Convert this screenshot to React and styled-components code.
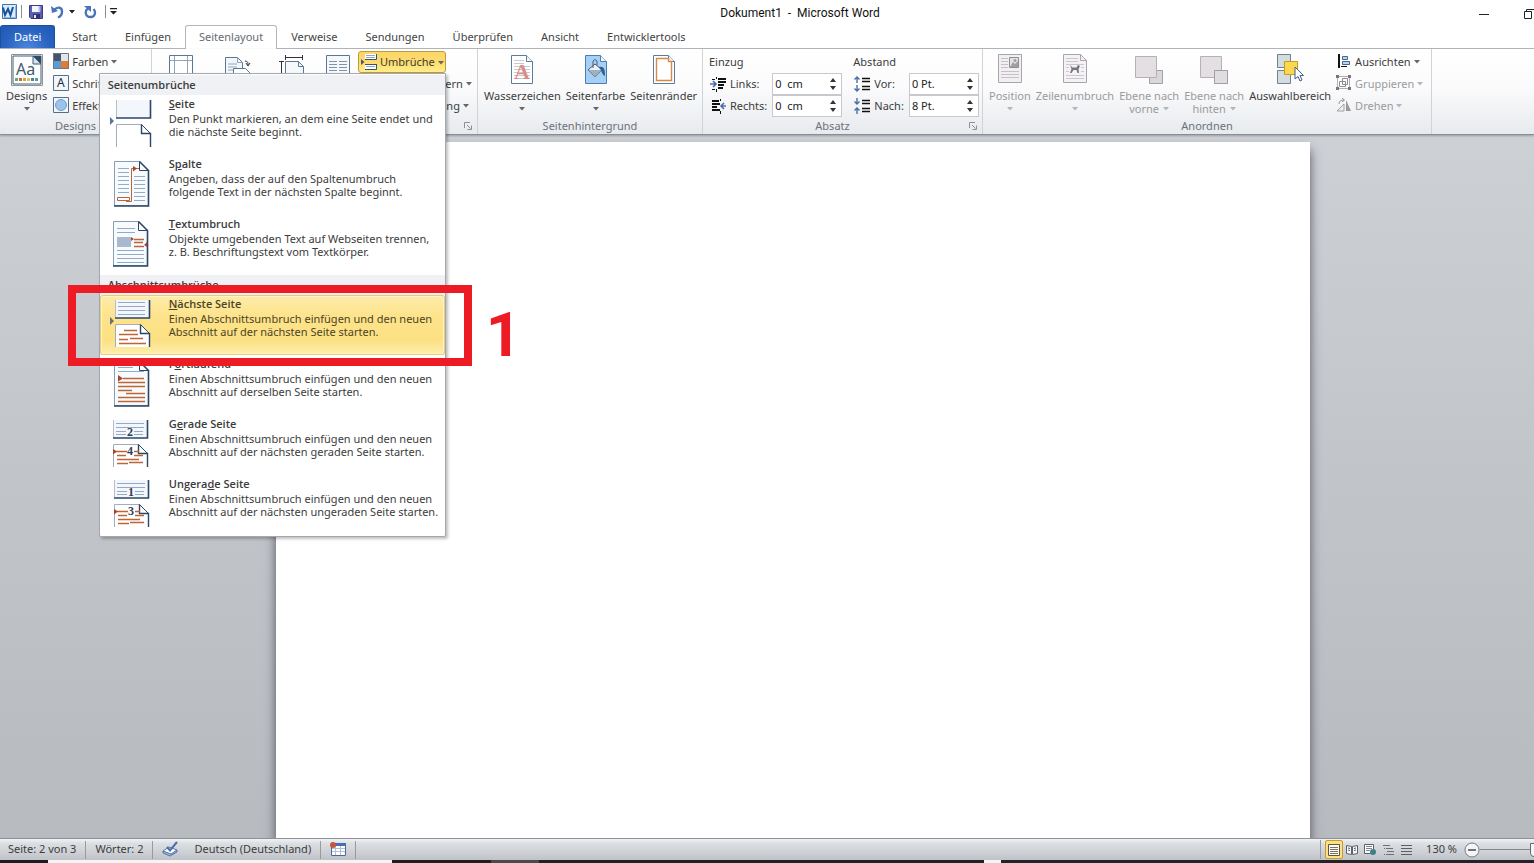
import React, { useState } from "react";
import styled, { createGlobalStyle, css } from "styled-components";

const GlobalStyle = createGlobalStyle`
  * { box-sizing: border-box; }
  body {
    margin: 0;
    overflow: hidden;
    font-family: "Noto Sans", "Open Sans", sans-serif;
    font-size: 11px;
    line-height: 13px;
    color: #3c3c3c;
  }
  button, input {
    font: inherit;
    color: inherit;
    margin: 0;
    padding: 0;
    border: 0;
    background: none;
  }
  ul { list-style: none; margin: 0; padding: 0; }
  svg { display: block; flex: none; }
`;

const Window = styled.div`
  display: flex;
  flex-direction: column;
  height: 100vh;
  background: #fff;
`;

/* ---------- title bar ---------- */

const TitleBar = styled.header`
  display: flex;
  align-items: center;
  height: 25px;
  flex: none;
`;

const QuickAccess = styled.div`
  flex: 1 1 66px;
  display: flex;
  align-items: center;
  height: 25px;
  padding: 0 0 2px 1px;
`;

const QuickButton = styled.button`
  display: flex;
  align-items: center;
  justify-content: center;
  width: ${(p) => p.$w || 16}px;
  height: 22px;
`;

const QuickLine = styled.span`
  width: 1px;
  height: 13px;
  margin: 0 ${(p) => p.$gap}px;
  background: #8d8d8d;
`;

const Title = styled.h1`
  margin: 0;
  padding-top: 2px;
  font-family: Roboto, sans-serif;
  font-size: 12px;
  font-weight: 400;
  color: #111;
  white-space: pre;
`;

const WindowControls = styled.div`
  flex: 1 1 0;
  display: flex;
  justify-content: flex-end;
  gap: 34px;
`;

/* ---------- tabs ---------- */

const TabStrip = styled.nav`
  display: flex;
  flex: none;
  height: 24px;
  border-bottom: 1px solid #b4b7bc;
`;

const Tab = styled.button`
  height: 24px;
  padding: 0 14px 2px;
  color: #444;
  ${(p) =>
    p.$active &&
    css`
      padding: 0 13px 2px;
      border: 1px solid #b4b7bc;
      border-bottom: 0;
      border-radius: 3px 3px 0 0;
      background: #fff;
      color: #666a72;
    `}
`;

const FileTab = styled(Tab)`
  margin-right: 3px;
  border: 1px solid #1c4fa3;
  border-bottom: 0;
  border-radius: 3px 3px 0 0;
  padding: 0 13px 1px;
  height: 23px;
  color: #fff;
  background: radial-gradient(ellipse at 50% 100%, #4a86dd, #2a62c0 60%, #2058b5);
`;

/* ---------- ribbon ---------- */

const Ribbon = styled.div`
  position: relative;
  z-index: 2;
  display: flex;
  flex: none;
  height: 86px;
  background: linear-gradient(#fff, #fbfbfc 45%, #e7eaee);
  border-bottom: 1px solid #898d94;
  box-shadow: 0 1px 2px rgba(60, 65, 75, 0.35);
`;

const Group = styled.section`
  display: flex;
  flex-direction: column;
  flex: none;
  width: ${(p) => p.$w}px;
  padding-top: 2px;
  border-right: 1px solid #d0d3d8;
`;

const GroupBody = styled.div`
  display: flex;
  flex: none;
  height: 66px;
  gap: ${(p) => p.$gap || 0}px;
  padding: 0 ${(p) => p.$pad || 0}px;
`;

const GroupFooter = styled.div`
  display: flex;
  align-items: center;
  height: 17px;
  color: #6d7179;
`;

const GroupLabel = styled.span`
  flex: 1;
  text-align: center;
  white-space: nowrap;
`;

const Launcher = styled.button`
  display: flex;
  justify-content: flex-end;
  width: 20px;
  padding-right: 5px;
`;

const BigButton = styled.button`
  display: flex;
  flex-direction: column;
  align-items: center;
  flex: none;
  width: ${(p) => (p.$w ? p.$w + "px" : "auto")};
  padding-top: 3px;
  white-space: nowrap;
  color: ${(p) => (p.disabled ? "#9b9b9b" : "#3c3c3c")};

  > svg { margin-bottom: 3px; }
`;

const CaretLine = styled.span`
  display: flex;
  align-items: center;
  justify-content: center;
  gap: 4px;
  height: 13px;
`;

const Stack = styled.div`
  display: flex;
  flex-direction: column;
  align-items: flex-start;
  flex: none;
`;

const SmallButton = styled.button`
  display: flex;
  align-items: center;
  gap: 3px;
  height: 22px;
  white-space: nowrap;
  padding: 0 ${(p) => p.$pad || 0}px 2px;
  color: ${(p) => (p.disabled ? "#9b9b9b" : "#3c3c3c")};

  > svg:last-child { margin-top: 2px; }

  ${(p) =>
    p.$open &&
    css`
      padding: 0 1px 1px 2px;
      border: 1px solid #c19a3b;
      border-radius: 3px;
      background: linear-gradient(#fbd668, #fddc6d 50%, #ffee88);
    `}
`;

const BreaksAnchor = styled.div`
  position: relative;
`;

const FieldColumn = styled.div`
  display: grid;
  grid-template-columns: auto auto 70px;
  grid-template-rows: 22px 22px 22px;
  align-items: center;
  padding: 0 ${(p) => p.$right}px 0 6px;
`;

const FieldTitle = styled.span`
  grid-column: 1 / -1;
  padding-bottom: 2px;
`;

const FieldLabel = styled.label`
  padding: 0 5px 2px 4px;
`;

const FieldLine = styled.span`
  width: 1px;
  margin: 2px 0;
  background: #dcdee2;
`;

const Spin = styled.div`
  display: flex;
  height: 22px;
  border: 1px solid #c6cace;
  background: #fff;
`;

const SpinInput = styled.input`
  flex: 1;
  min-width: 0;
  padding: 0 0 2px 2px;
  color: #222;
  outline: none;
`;

const SpinButtons = styled.div`
  display: flex;
  flex-direction: column;
  align-items: center;
  justify-content: space-evenly;
  width: 16px;
`;

/* ---------- drop-down ---------- */

const Menu = styled.ul`
  position: absolute;
  top: 100%;
  right: 0;
  width: 347px;
  padding: 1px 0;
  background: #fff;
  border: 1px solid #a3a8b0;
  border-radius: 0 0 2px 2px;
  box-shadow: 2px 2px 3px rgba(0, 0, 0, 0.25);
`;

const MenuHeading = styled.li`
  height: 20px;
  padding: 3px 8px;
  font-family: "Open Sans", sans-serif;
  font-weight: 600;
  background: #eff1f5;
`;

const MenuRow = styled.li`
  position: relative;
  z-index: ${(p) => (p.$marked ? 1 : 0)};
`;

const MenuItem = styled.button`
  display: flex;
  width: 100%;
  height: 60px;
  padding: 2px 0 0 8px;
  gap: 17px;
  text-align: left;
  white-space: nowrap;

  > svg { margin-top: 1px; }

  ${(p) =>
    p.$hot &&
    css`
      border-radius: 3px;
      color: #4c4424;
      background: linear-gradient(#fdecab, #fde38b 35%, #fce083 75%, #fdf0ae);
      box-shadow: inset 0 0 0 1px #e8cd78, inset 0 0 0 2px #fef3c4;
    `}
`;

const ItemTitle = styled.strong`
  display: block;
  margin-bottom: 2px;
  font-family: "Open Sans", sans-serif;
  font-weight: 600;
`;

const ItemText = styled.span`
  display: block;
`;

const Marker = styled.div`
  position: absolute;
  top: -10px;
  right: -27px;
  bottom: -11px;
  left: -32px;
  border: 8px solid #ed1c24;
  pointer-events: none;
`;

const MarkerNumber = styled.span`
  position: absolute;
  top: 11px;
  left: calc(100% + 22px);
  font: bold 62px/62px Roboto, sans-serif;
  color: #ed1c24;
`;

/* ---------- document ---------- */

const Workspace = styled.main`
  flex: 1;
  display: flex;
  min-height: 0;
  padding: 7px 224px 0 276px;
  background: linear-gradient(#cdd0d5, #c1c4c9 50%, #b7babf);
`;

const Page = styled.article`
  flex: 1;
  background: #fff;
  box-shadow: 0 8px 10px rgba(60, 64, 72, 0.85);
`;

/* ---------- status bar ---------- */

const StatusBar = styled.footer`
  position: relative;
  display: flex;
  align-items: center;
  flex: none;
  height: 22px;
  padding-left: 8px;
  border-top: 1px solid #8d9198;
  background: linear-gradient(#f1f3f6, #dde0e3 20%, #bfc3c7);
`;

const StatusButton = styled.button`
  height: 20px;
  padding-bottom: 2px;
  white-space: nowrap;

  & + & { margin-left: 15px; }
`;

const StatusLine = styled.span`
  width: 1px;
  height: 18px;
  margin: 0 9px;
  background: #979ba1;
`;

const ViewButtons = styled.div`
  display: flex;
  margin-left: auto;
  padding-left: 4px;
  border-left: 1px solid #979ba1;
`;

const ViewButton = styled.button`
  display: flex;
  align-items: center;
  justify-content: center;
  width: 18px;
  height: 19px;
  border-radius: 2px;
  ${(p) =>
    p.$active &&
    css`
      border: 1px solid #c79a34;
      background: #fde083;
    `}
`;

const ZoomText = styled.span`
  margin: 0 7px 0 11px;
  padding-bottom: 2px;
`;

const ZoomClip = styled.div`
  width: 54px;
  height: 20px;
  overflow: hidden;
`;

const ZoomRange = styled.input`
  display: block;
  appearance: none;
  width: 120px;
  height: 20px;

  &::-webkit-slider-runnable-track {
    height: 14px;
    background: linear-gradient(#85898f, #85898f) 0 50% / 100% 1px no-repeat;
  }
  &::-webkit-slider-thumb {
    appearance: none;
    width: 9px;
    height: 14px;
    border: 1px solid #666a70;
    border-radius: 1px 1px 5px 5px;
    background: #f4f5f6;
  }
`;

const TaskEdge = styled.div`
  display: flex;
  flex: none;
  height: 3px;
  background: #212329;
`;

const TaskSegment = styled.span`
  flex: none;
  width: ${(p) => p.$w}px;
  background: ${(p) => p.$c};
`;

/* ---------- icons ---------- */

const Caret = ({ color = "#666" }) => (
  <svg width="6" height="4" viewBox="0 0 6 4">
    <path d="M0 0h6L3 3.500z" fill={color} />
  </svg>
);

const SpinArrow = ({ down }) => (
  <svg width="6" height="4" viewBox="0 0 6 4">
    <path d={down ? "M0 0h6L3 4z" : "M0 4h6L3 0z"} fill="#333" />
  </svg>
);

const LauncherIcon = () => (
  <svg width="8" height="8" viewBox="0 0 8 8" fill="none" stroke="#8b8f96">
    <path d="M.5 6V.5H6M3 3l3.500 3.500M7.500 3.500v4h-4" />
  </svg>
);

const WordLogo = () => (
  <svg width="16" height="17" viewBox="0 0 16 17">
    <path d="M1.500 1.500h14v14h-14z" fill="#dcecf8" stroke="#3c76b5" />
    <path d="M3 14.500h11.500V3" fill="none" stroke="#8db7dc" />
    <path d="M2 4.500l2 7.500L7 6l2.500 6L12 4" fill="none" stroke="#17539b" strokeWidth="2" />
  </svg>
);

const SaveIcon = () => (
  <svg width="14" height="14" viewBox="0 0 14 14">
    <path d="M.5.5h13v13H2L.5 12z" fill="#5b5fb5" stroke="#3a3c86" />
    <path d="M3 1h8v6H3z" fill="#f3f5fc" />
    <path d="M9.500 1h2v5.500h-2z" fill="#b4b9e4" />
    <path d="M4 9h7v5H4z" fill="#31336f" />
    <path d="M5 10h2v3H5z" fill="#e9ebf7" />
  </svg>
);

const UndoIcon = () => (
  <svg width="13" height="14" viewBox="0 0 13 14">
    <path d="M3 5C7 1 11 2.500 11 6.500c0 3-1.500 5-4 6" fill="none" stroke="#4a72bd" strokeWidth="2.400" />
    <path d="M0 1l1 7 6-2z" fill="#4a72bd" />
  </svg>
);

const RedoIcon = () => (
  <svg width="13" height="14" viewBox="0 0 13 14">
    <path d="M9.500 4c2.500 2.500 2 8-3 8-5.500 0-6-6.500-2.500-8.500" fill="none" stroke="#4a72bd" strokeWidth="2.300" />
    <path d="M0 1h7v6z" fill="#4a72bd" />
  </svg>
);

const CustomizeIcon = () => (
  <svg width="7" height="7" viewBox="0 0 7 7">
    <path d="M0 0h7v1.200H0zM0 3h7L3.500 6.500z" fill="#222" />
  </svg>
);

const DesignsIcon = () => (
  <svg width="32" height="32" viewBox="0 0 32 32">
    <path d="M.5.5h31v31H.5z" fill="#fff" stroke="#8d939b" />
    <path d="M2 2h28v28H2z" fill="#fdfefe" stroke="#3f5f72" />
    <path d="M22 2h8v8z" fill="#2f4a66" />
    <path d="M22 2v8h8z" fill="#d8e2ec" stroke="#3f5f72" />
    <text x="5" y="21" fontFamily="Noto Sans, sans-serif" fontSize="16" fill="#45586e">Aa</text>
    <path d="M4 24h3v3H4z" fill="#71a56b" />
    <path d="M8 24h3v3H8z" fill="#c4685f" />
    <path d="M12 24h3v3h-3z" fill="#d9a23f" />
    <path d="M16 24h3v3h-3z" fill="#dec44c" />
    <path d="M20 24h3v3h-3z" fill="#4f7fb5" />
    <path d="M24 24h3v3h-3z" fill="#5c9a9b" />
  </svg>
);

const ColorsIcon = () => (
  <svg width="16" height="16" viewBox="0 0 16 16">
    <path d="M0 0h8v8H0z" fill="#47546c" />
    <path d="M8 0h8v8H8z" fill="#dfe6ee" />
    <path d="M0 8h8v8H0z" fill="#5a9bd5" />
    <path d="M8 8h8v8H8z" fill="#df7b35" />
    <path d="M.5.5h15v15H.5z" fill="none" stroke="#6d7684" />
  </svg>
);

const FontsIcon = () => (
  <svg width="16" height="16" viewBox="0 0 16 16">
    <path d="M.5.5h15v15H.5z" fill="#f2f6fa" stroke="#56708a" />
    <text x="4" y="12" fontFamily="Noto Sans, sans-serif" fontSize="12" fill="#1f2c3a">A</text>
  </svg>
);

const EffectsIcon = () => (
  <svg width="16" height="16" viewBox="0 0 16 16">
    <path d="M.5.5h15v15H.5z" fill="#f2f6fa" stroke="#56708a" />
    <circle cx="8" cy="8" r="5.500" fill="#9cc3ea" stroke="#6f9fd0" />
  </svg>
);

const MarginsIcon = () => (
  <svg width="26" height="32" viewBox="0 0 26 32">
    <path d="M1.500 1.500h23v29h-23z" fill="#fff" stroke="#5d7692" />
    <path d="M6.500 2v28M19.500 2v28M2 6.500h22M2 25.500h22" stroke="#8ea5bd" />
  </svg>
);

const OrientationIcon = () => (
  <svg width="28" height="32" viewBox="0 0 28 32">
    <path d="M1.500 3.500h12l5 5v20h-17z" fill="#f3f7fb" stroke="#5d7692" />
    <path d="M13.500 3.500v5h5M4 10h9M4 13h9M4 16h9" fill="none" stroke="#8ea5bd" />
    <path d="M9.500 14.500h12l5 5v11h-17z" fill="#fff" stroke="#5d7692" />
    <path d="M21 7c3 0 3 2 3 4M22 9l2 3 2-3" fill="none" stroke="#333" />
  </svg>
);

const SizeIcon = () => (
  <svg width="26" height="32" viewBox="0 0 26 32">
    <path d="M6.500 7.500h13l5 5v19h-18z" fill="#f6f9fc" stroke="#5d7692" />
    <path d="M19.500 7.500v5h5" fill="none" stroke="#5d7692" />
    <path d="M6 3.500h18M6.500 1v5M23.500 1v5M2.500 8v22M0 7.500h5" stroke="#333" />
  </svg>
);

const ColumnsIcon = () => (
  <svg width="26" height="32" viewBox="0 0 26 32">
    <path d="M1.500 1.500h23v30h-23z" fill="#f6f9fc" stroke="#5d7692" />
    <path d="M4 7.500h8M4 10.500h8M4 13.500h8M4 16.500h8M14 7.500h8M14 10.500h8M14 13.500h8M14 16.500h8" stroke="#7f93aa" />
  </svg>
);

const BreaksIcon = () => (
  <svg width="16" height="16" viewBox="0 0 16 16">
    <path d="M4 0h11v6H4zM4 10h11v6H4z" fill="#fff" />
    <path d="M4 5.500h11.500V0M4 15.500h11.500V10M4 10.500h11" fill="none" stroke="#35527a" />
    <path d="M5 1.500h9M5 3.500h9M5 12.500h9" stroke="#93a6bd" />
    <path d="M0 5l3.500 3L0 11z" fill="#46597a" />
  </svg>
);

const LinesIcon = () => (
  <svg width="16" height="16" viewBox="0 0 16 16">
    <path d="M5 3.500h10M5 7.500h10M5 11.500h10" stroke="#667b94" />
    <path d="M1.500 2v3M1.500 6v3M1.500 10v3" stroke="#333" />
  </svg>
);

/* a sheet with a folded corner, shared by the page background buttons */
const Sheet = ({ fill = "#fff", stroke = "#5d7c9c" }) => (
  <g>
    <path d="M1.500 1.500h15l6 6v22h-21z" fill={fill} stroke={stroke} />
    <path d="M16.500 1.500v6h6" fill="#f1f5f9" stroke={stroke} />
  </g>
);

const WatermarkIcon = () => (
  <svg width="24" height="32" viewBox="0 0 24 32">
    <Sheet />
    <path d="M4 6.500h10M4 9.500h10M4 12.500h16M4 15.500h16M4 18.500h16M4 21.500h16M4 24.500h16" stroke="#c3cad3" />
    <text x="4" y="25" fontFamily="Liberation Serif, serif" fontWeight="bold" fontSize="22" fill="#dc8d88">A</text>
  </svg>
);

const PageColorIcon = () => (
  <svg width="24" height="32" viewBox="0 0 24 32">
    <Sheet fill="#a5d0f5" stroke="#4d7fae" />
    <path d="M4 16l7-6 7 6-7 7z" fill="#eef2f6" stroke="#4a5a6c" />
    <path d="M4 16h14l-7 7z" fill="#9fb0c2" />
    <path d="M9 14V8c0-3 4-3 4 0v3" fill="none" stroke="#4a5a6c" />
    <path d="M15 13c5-1 6 2 6 9-3-1-3-5-6-9z" fill="#2f5f98" />
  </svg>
);

const PageBorderIcon = () => (
  <svg width="24" height="32" viewBox="0 0 24 32">
    <Sheet />
    <path d="M4.500 4.500h12v3h3v19h-15z" fill="none" stroke="#d48a4a" strokeWidth="1.400" />
  </svg>
);

const IndentIcon = ({ right }) => (
  <svg width="17" height="16" viewBox="0 0 17 16">
    {right ? (
      <g>
        <path d="M3 3h7M3 6h8M3 9h5M3 12h8" stroke="#111" strokeWidth="2" />
        <path d="M11.500 1v2M11.500 13v3" stroke="#111" />
        <path d="M17 8h-4M15 5l-3 3 3 3" fill="none" stroke="#4a6fa8" strokeWidth="1.600" />
      </g>
    ) : (
      <g>
        <path d="M9 3h8M9 6h8M9 9h6M9 12h5" stroke="#111" strokeWidth="2" />
        <path d="M7.500 1v2M7.500 13v3M3 3.500h3M3 13.500h3" stroke="#111" />
        <path d="M1 8h5M4 5l3 3-3 3" fill="none" stroke="#4a6fa8" strokeWidth="1.600" />
      </g>
    )}
  </svg>
);

const SpacingIcon = ({ after }) => (
  <svg width="17" height="16" viewBox="0 0 17 16">
    <path d="M9 2.500h8M9 5.500h8M9 10.500h8M9 13.500h8" stroke="#111" strokeWidth="1.400" />
    <g fill="none" stroke="#4a6fa8" strokeWidth="1.400">
      <path d={after ? "M4 0v6M1.500 3.500L4 6l2.500-2.500" : "M4 7V1M1.500 3.500L4 1l2.500 2.500"} />
      <path d={after ? "M4 16v-6M1.500 12.500L4 10l2.500 2.500" : "M4 9v6M1.500 12.500L4 15l2.500-2.500"} />
    </g>
  </svg>
);

const PositionIcon = () => (
  <svg width="26" height="32" viewBox="0 0 26 32">
    <path d="M1.500.5h23v28h-23z" fill="#f1eff1" stroke="#a9a6ab" />
    <path d="M4 4.500h7M4 7.500h7M4 10.500h7M4 13.500h7M4 17.500h18M4 20.500h18M4 23.500h18" stroke="#c5c1c6" />
    <path d="M12.500 3.500h9v10h-9z" fill="#e4e2e6" stroke="#8f8c92" />
    <path d="M13 13l3-5 2 2 3-3v6z" fill="#a19ea4" />
    <circle cx="18" cy="6.500" r="1.500" fill="#a19ea4" />
  </svg>
);

const WrapIcon = () => (
  <svg width="26" height="32" viewBox="0 0 26 32">
    <path d="M1.500.5h17l6 6v22h-23z" fill="#f4f2f4" stroke="#a9a6ab" />
    <path d="M18.500.5v6h6" fill="none" stroke="#a9a6ab" />
    <path d="M4 4.500h12M4 7.500h12M4 10.500h18M4 13.500h3M19 13.500h3M4 17.500h3M19 17.500h3M4 21.500h18M4 24.500h18" stroke="#cbc7cc" />
    <path d="M8 11l2.500 2.500h4L16 11l2 1-1.500 3 .5 4h-1.500l-1-3h-3l-2 3H8l1.500-4z" fill="#77747b" />
  </svg>
);

const LayerIcon = ({ back }) => (
  <svg width="30" height="32" viewBox="0 0 30 32">
    <path d="M15.500 16.500h13v13h-13z" fill="#dad7db" stroke="#a39fa5" />
    <path d="M1.500 2.500h21v21h-21z" fill="#e3dfe3" stroke="#b5b1b6" />
    {back && <path d="M15.500 16.500h13v13h-13z" fill="#e0dde1" stroke="#a39fa5" />}
  </svg>
);

const SelectionIcon = () => (
  <svg width="28" height="32" viewBox="0 0 28 32">
    <path d="M1.500.5h13v13h-13zM1.500 16.500h13v13h-13z" fill="#d5dce0" stroke="#6d8293" />
    <path d="M8.500 7.500h13v13h-13z" fill="#fbd84d" stroke="#c79b22" />
    <path d="M19 13v12l3-2.500 2 4.500 2-1-2-4.500h3.500z" fill="#fff" stroke="#3f5f8f" />
  </svg>
);

const AlignIcon = () => (
  <svg width="16" height="14" viewBox="0 0 16 14">
    <path d="M3 0v14" stroke="#111" strokeWidth="2" />
    <path d="M6.500 2.500h5v3h-5zM6.500 7.500h7v3h-7z" fill="#bcd4ef" stroke="#46658c" />
    <path d="M5 12.500h6" stroke="#111" />
  </svg>
);

const GroupIcon = () => (
  <svg width="16" height="16" viewBox="0 0 16 16">
    <path d="M1.500 1.500h12v12h-12z" fill="none" stroke="#b1aeb4" />
    <path d="M3.500 6.500h6v5h-6zM6.500 3.500h5v6h-5z" fill="none" stroke="#8f8c92" />
    <path d="M0 0h3v3H0zM12 0h3v3h-3zM0 12h3v3H0zM12 12h3v3h-3z" fill="#77747b" />
  </svg>
);

const RotateIcon = () => (
  <svg width="16" height="14" viewBox="0 0 16 14">
    <path d="M10 2l5 11h-5z" fill="#99969c" />
    <path d="M8 6v7H1z" fill="#f0eef0" stroke="#a39fa5" />
    <path d="M3 6c0-3 2-4 5-4M6 0l2.500 2L6 4" fill="none" stroke="#99969c" />
  </svg>
);

/* upper and lower sheet of a page break */
const SplitSheets = ({ x = 6, children }) => (
  <g>
    <path d={`M${x} 2h35v18h-35z`} fill="#f3f7fc" />
    <path d={`M${x + 0.5} 2v17`} stroke="#b4bdc9" />
    <path d={`M${x} 20h34.500V2`} fill="none" stroke="#2c4668" strokeWidth="1.600" />
    <path d={`M${x + 0.5} 49V26.500h25l9 9V49`} fill="#fff" stroke="#a2adbb" />
    <path d={`M${x + 25.5} 26.500v9h9V49`} fill="none" stroke="#2c4668" strokeWidth="1.400" />
    <path d={`M${x + 25.5} 26.500l9 9`} stroke="#2c4668" />
    {children}
  </g>
);

const FullSheet = ({ x = 6, children }) => (
  <g>
    <path d={`M${x + 0.5} 3.500h25l9 9v35h-34z`} fill="#f8fbfe" stroke="#8b9db3" />
    <path d={`M${x + 25.5} 3.500v9h9`} fill="#fff" stroke="#2c4668" />
    <path d={`M${x + 25.5} 3.500l9 9V48H${x}`} fill="none" stroke="#2c4668" strokeWidth="1.600" />
    {children}
  </g>
);

const BLUE = "#93abc8";
const RUST = "#bd6537";

const PageBreakArt = () => (
  <SplitSheets x={8}>
    <path d="M2 19l4 4-4 4z" fill="#55759c" />
  </SplitSheets>
);

const ColumnBreakArt = () => (
  <FullSheet>
    <path
      d="M10 10.500h11M10 14.500h11M10 18.500h11M10 22.500h11M10 26.500h11M10 30.500h11M10 34.500h11M26 18.500h11M26 22.500h11M26 26.500h11M26 30.500h11M26 34.500h11M26 38.500h11M26 42.500h11"
      stroke={BLUE}
    />
    <path d="M9.500 39.500h12v3h-12zM18 43.500h5.500V10.500H25M28 10.500h3" fill="none" stroke={RUST} />
    <path d="M25 8l4 2.500-4 3z" fill="#a8442f" />
  </FullSheet>
);

const TextWrapArt = () => (
  <FullSheet x={5}>
    <path d="M9 10.500h18M9 14.500h18M9 32.500h27M9 36.500h27M9 40.500h27M9 44.500h27" stroke={BLUE} />
    <path d="M9 19h14v10H9z" fill="#a9b9d0" />
    <path d="M26 21.500h10M26 24.500h9M26 28.500h10" stroke={RUST} strokeWidth="1.300" />
    <path d="M23 19l3 2-3 2zM39 24v5l-3-2z" fill="#a8442f" />
  </FullSheet>
);

const NextPageArt = () => (
  <SplitSheets x={7}>
    <path d="M10 4.500h27M10 8.500h27M10 12.500h27M10 16.500h27" stroke={BLUE} />
    <path d="M2 19l4 4-4 4z" fill="#66717e" />
    <path d="M16 32.500h13M11 36.500h19M22 40.500h13M11 41.500h9M11 45.500h27" stroke={RUST} strokeWidth="1.300" />
  </SplitSheets>
);

const ContinuousArt = () => (
  <FullSheet>
    <path d="M10 9.500h15M10 13.500h26" stroke={BLUE} />
    <path
      d="M15 20.500h21M10 24.500h27M10 28.500h27M10 32.500h14M18 35.500h19M10 39.500h27M10 43.500h27"
      stroke={RUST}
      strokeWidth="1.300"
    />
    <path d="M10 17l5 3.500-5 3z" fill="#a8442f" />
  </FullSheet>
);

const NumberedArt = ({ top, bottom, x }) => (
  <SplitSheets x={x}>
    <path d={`M${x + 3} 5.500h28M${x + 3} 9.500h28M${x + 3} 13.500h10M${x + 21} 13.500h9M${x + 3} 16.500h10M${x + 21} 16.500h9`} stroke={BLUE} />
    <path
      d={`M${x + 3} 33.500h11M${x + 21} 33.500h5M${x + 4} 37.500h9M${x + 21} 37.500h9M${x + 4} 41.500h22M${x + 4} 45.500h11M${x + 16} 44.500h14`}
      stroke={RUST}
      strokeWidth="1.300"
    />
    <path d={`M${x} 31l4 2.500-4 3z`} fill="#a8442f" />
    <g fontFamily="Liberation Serif, serif" fontWeight="bold" fontSize="12" fill="#2f3c58">
      <text x={x + 14} y="18">{top}</text>
      <text x={x + 14} y="37">{bottom}</text>
    </g>
  </SplitSheets>
);

const ProofIcon = () => (
  <svg width="17" height="16" viewBox="0 0 17 16">
    <path d="M1 10l6-4 8 3-6 5z" fill="#fff" stroke="#5577a8" />
    <path d="M1 10v2l7 3 7-4V9l-6 4z" fill="#9fb6d8" stroke="#5577a8" />
    <path d="M5 6l3 3.500L15 1" fill="none" stroke="#4a6dad" strokeWidth="2" />
  </svg>
);

const MacroIcon = () => (
  <svg width="16" height="14" viewBox="0 0 16 14">
    <path d="M1.500 1.500h14v12h-14z" fill="#fff" stroke="#4a6a9b" />
    <path d="M1 1h15v3H1z" fill="#4a6dad" />
    <path d="M2 6.500h13M2 9.500h13M5.500 4v9M10.500 4v9" stroke="#b3c0d4" />
    <circle cx="3" cy="3" r="3" fill="#c4573c" />
  </svg>
);

const PrintViewIcon = () => (
  <svg width="12" height="12" viewBox="0 0 12 12">
    <path d="M.5.5h11v11H.5z" fill="#fffbe8" stroke="#57564d" />
    <path d="M2 3.500h8M2 5.500h8M2 7.500h8M2 9.500h8" stroke="#77756a" />
  </svg>
);

const ReadViewIcon = () => (
  <svg width="12" height="11" viewBox="0 0 12 11">
    <path d="M.5 1.500l5 1v8l-5-1zM11.500 1.500l-5 1v8l5-1z" fill="#f8f9fa" stroke="#5b6068" />
    <path d="M2 4l2 .5M2 6l2 .5M8 4.500l2-.5M8 6.500l2-.5" stroke="#5b6068" />
  </svg>
);

const WebViewIcon = () => (
  <svg width="13" height="12" viewBox="0 0 13 12">
    <path d="M.5.5h9v9h-9z" fill="#fff" stroke="#5b6068" />
    <path d="M2 2.500h6M2 4.500h6M2 6.500h4" stroke="#7e848c" />
    <circle cx="9" cy="8" r="3" fill="#3f8088" />
  </svg>
);

const OutlineIcon = () => (
  <svg width="11" height="10" viewBox="0 0 11 10">
    <path d="M0 .5h7M3 3.500h7M4 6.500h7M3 9.500h8M0 .5h1M1 3.500h1M1 9.500h1" stroke="#6b7077" />
  </svg>
);

const DraftIcon = () => (
  <svg width="11" height="10" viewBox="0 0 11 10">
    <path d="M0 .5h11M0 3.500h11M0 6.500h11M0 9.500h11" stroke="#5b6068" />
  </svg>
);

const ZoomOutIcon = () => (
  <svg width="16" height="16" viewBox="0 0 16 16">
    <circle cx="8" cy="8" r="7" fill="#f4f5f6" stroke="#777b82" />
    <path d="M4 8h8" stroke="#4f545b" strokeWidth="1.600" />
  </svg>
);

/* ---------- parts ---------- */

const pageBreaks = [
  { id: "seite", title: ["", "S", "eite"], lines: ["Den Punkt markieren, an dem eine Seite endet und", "die nächste Seite beginnt."], art: <PageBreakArt /> },
  { id: "spalte", title: ["S", "p", "alte"], lines: ["Angeben, dass der auf den Spaltenumbruch", "folgende Text in der nächsten Spalte beginnt."], art: <ColumnBreakArt /> },
  { id: "text", title: ["", "T", "extumbruch"], lines: ["Objekte umgebenden Text auf Webseiten trennen,", "z. B. Beschriftungstext vom Textkörper."], art: <TextWrapArt /> },
];

const sectionBreaks = [
  { id: "naechste", title: ["", "N", "ächste Seite"], lines: ["Einen Abschnittsumbruch einfügen und den neuen", "Abschnitt auf der nächsten Seite starten."], art: <NextPageArt />, marked: true },
  { id: "fortlaufend", title: ["F", "o", "rtlaufend"], lines: ["Einen Abschnittsumbruch einfügen und den neuen", "Abschnitt auf derselben Seite starten."], art: <ContinuousArt /> },
  { id: "gerade", title: ["G", "e", "rade Seite"], lines: ["Einen Abschnittsumbruch einfügen und den neuen", "Abschnitt auf der nächsten geraden Seite starten."], art: <NumberedArt x={5} top="2" bottom="4" /> },
  { id: "ungerade", title: ["Ungera", "d", "e Seite"], lines: ["Einen Abschnittsumbruch einfügen und den neuen", "Abschnitt auf der nächsten ungeraden Seite starten."], art: <NumberedArt x={6} top="1" bottom="3" /> },
];

const BreakRow = ({ item }) => (
  <MenuRow $marked={item.marked}>
    <MenuItem $hot={item.marked}>
      <svg width="44" height="50" viewBox="0 0 44 50">{item.art}</svg>
      <span>
        <ItemTitle>
          {item.title[0]}
          <u>{item.title[1]}</u>
          {item.title[2]}
        </ItemTitle>
        {item.lines.map((line) => (
          <ItemText key={line}>{line}</ItemText>
        ))}
      </span>
    </MenuItem>
    {item.marked && (
      <Marker>
        <MarkerNumber>1</MarkerNumber>
      </Marker>
    )}
  </MenuRow>
);

const SpinField = ({ id, label, icon, value }) => (
  <>
    {icon}
    <FieldLabel htmlFor={id}>{label}</FieldLabel>
    <Spin>
      <SpinInput id={id} type="text" defaultValue={value} />
      <SpinButtons>
        <button aria-label="+"><SpinArrow /></button>
        <button aria-label="-"><SpinArrow down /></button>
      </SpinButtons>
    </Spin>
  </>
);

const Footer = ({ label, launcher }) => (
  <GroupFooter>
    <GroupLabel>{label}</GroupLabel>
    {launcher && (
      <Launcher aria-label="Dialogfeld öffnen">
        <LauncherIcon />
      </Launcher>
    )}
  </GroupFooter>
);

const tabs = ["Start", "Einfügen", "Seitenlayout", "Verweise", "Sendungen", "Überprüfen", "Ansicht", "Entwicklertools"];

const App = () => {
  const [activeTab, setActiveTab] = useState("Seitenlayout");
  const [menuOpen, setMenuOpen] = useState(true);

  return (
    <Window>
      <GlobalStyle />
      <TitleBar>
        <QuickAccess>
          <WordLogo />
          <QuickLine $gap={4} />
          <QuickButton $w={20} aria-label="Speichern"><SaveIcon /></QuickButton>
          <QuickButton $w={22} aria-label="Rückgängig"><UndoIcon /></QuickButton>
          <QuickButton $w={8} aria-label="Rückgängig-Liste"><Caret color="#222" /></QuickButton>
          <QuickButton $w={28} aria-label="Wiederholen"><RedoIcon /></QuickButton>
          <QuickLine $gap={1} />
          <QuickButton $w={12} aria-label="Anpassen"><CustomizeIcon /></QuickButton>
        </QuickAccess>
        <Title>{"Dokument1  -  Microsoft Word"}</Title>
        <WindowControls>
          <button aria-label="Minimieren">
            <svg width="10" height="12" viewBox="0 0 10 12"><path d="M0 7.500h10" stroke="#222" /></svg>
          </button>
          <button aria-label="Wiederherstellen">
            <svg width="11" height="12" viewBox="0 0 11 12" fill="none" stroke="#222">
              <path d="M1.500 4.500h7v7h-7zM3.500 4.500v-2H11" />
            </svg>
          </button>
        </WindowControls>
      </TitleBar>

      <TabStrip>
        <FileTab>Datei</FileTab>
        {tabs.map((tab) => (
          <Tab key={tab} $active={tab === activeTab} onClick={() => setActiveTab(tab)}>
            {tab}
          </Tab>
        ))}
      </TabStrip>

      <Ribbon>
        <Group $w={152}>
          <GroupBody $gap={6} $pad={6}>
            <BigButton>
              <DesignsIcon />
              Designs
              <CaretLine><Caret /></CaretLine>
            </BigButton>
            <Stack>
              <SmallButton><ColorsIcon />Farben <Caret /></SmallButton>
              <SmallButton><FontsIcon />Schriftarten <Caret /></SmallButton>
              <SmallButton><EffectsIcon />Effekte <Caret /></SmallButton>
            </Stack>
          </GroupBody>
          <Footer label="Designs" />
        </Group>

        <Group $w={326}>
          <GroupBody>
            <BigButton $w={57} aria-label="Seitenränder"><MarginsIcon /></BigButton>
            <BigButton $w={58} aria-label="Ausrichtung"><OrientationIcon /></BigButton>
            <BigButton $w={50} aria-label="Größe"><SizeIcon /></BigButton>
            <BigButton $w={41} aria-label="Spalten"><ColumnsIcon /></BigButton>
            <Stack>
              <BreaksAnchor>
                <SmallButton $open={menuOpen} onClick={() => setMenuOpen(!menuOpen)}>
                  <BreaksIcon />Umbrüche <Caret />
                </SmallButton>
                {menuOpen && (
                  <Menu>
                    <MenuHeading>Seitenumbrüche</MenuHeading>
                    {pageBreaks.map((item) => <BreakRow key={item.id} item={item} />)}
                    <MenuHeading>Abschnittsumbrüche</MenuHeading>
                    {sectionBreaks.map((item) => <BreakRow key={item.id} item={item} />)}
                  </Menu>
                )}
              </BreaksAnchor>
              <SmallButton $pad={3}><LinesIcon />Zeilennummern <Caret /></SmallButton>
              <SmallButton $pad={3}><LinesIcon />Silbentrennung <Caret /></SmallButton>
            </Stack>
          </GroupBody>
          <Footer launcher />
        </Group>

        <Group $w={225}>
          <GroupBody $gap={5} $pad={6}>
            <BigButton>
              <WatermarkIcon />
              Wasserzeichen
              <CaretLine><Caret /></CaretLine>
            </BigButton>
            <BigButton>
              <PageColorIcon />
              Seitenfarbe
              <CaretLine><Caret /></CaretLine>
            </BigButton>
            <BigButton><PageBorderIcon />Seitenränder</BigButton>
          </GroupBody>
          <Footer label="Seitenhintergrund" />
        </Group>

        <Group $w={280}>
          <GroupBody>
            <FieldColumn $right={5}>
              <FieldTitle>Einzug</FieldTitle>
              <SpinField id="left" label="Links:" icon={<IndentIcon />} value="0  cm" />
              <SpinField id="right" label="Rechts:" icon={<IndentIcon right />} value="0  cm" />
            </FieldColumn>
            <FieldLine />
            <FieldColumn $right={4}>
              <FieldTitle>Abstand</FieldTitle>
              <SpinField id="before" label="Vor:" icon={<SpacingIcon />} value="0 Pt." />
              <SpinField id="after" label="Nach:" icon={<SpacingIcon after />} value="8 Pt." />
            </FieldColumn>
          </GroupBody>
          <Footer label="Absatz" launcher />
        </Group>

        <Group $w={449}>
          <GroupBody $gap={5} $pad={6}>
            <BigButton disabled>
              <PositionIcon />
              Position
              <CaretLine><Caret color="#b5b5b5" /></CaretLine>
            </BigButton>
            <BigButton disabled>
              <WrapIcon />
              Zeilenumbruch
              <CaretLine><Caret color="#b5b5b5" /></CaretLine>
            </BigButton>
            <BigButton disabled>
              <LayerIcon />
              Ebene nach
              <CaretLine>vorne <Caret color="#b5b5b5" /></CaretLine>
            </BigButton>
            <BigButton disabled>
              <LayerIcon back />
              Ebene nach
              <CaretLine>hinten <Caret color="#b5b5b5" /></CaretLine>
            </BigButton>
            <BigButton><SelectionIcon />Auswahlbereich</BigButton>
            <Stack>
              <SmallButton><AlignIcon />Ausrichten <Caret /></SmallButton>
              <SmallButton disabled><GroupIcon />Gruppieren <Caret color="#b5b5b5" /></SmallButton>
              <SmallButton disabled><RotateIcon />Drehen <Caret color="#b5b5b5" /></SmallButton>
            </Stack>
          </GroupBody>
          <Footer label="Anordnen" />
        </Group>
      </Ribbon>

      <Workspace>
        <Page />
      </Workspace>

      <StatusBar>
        <StatusButton>Seite: 2 von 3</StatusButton>
        <StatusLine />
        <StatusButton>Wörter: 2</StatusButton>
        <StatusLine />
        <StatusButton aria-label="Rechtschreibung"><ProofIcon /></StatusButton>
        <StatusButton>Deutsch (Deutschland)</StatusButton>
        <StatusLine />
        <StatusButton aria-label="Makro"><MacroIcon /></StatusButton>
        <StatusLine />
        <ViewButtons>
          <ViewButton $active aria-label="Seitenlayout"><PrintViewIcon /></ViewButton>
          <ViewButton aria-label="Vollbild-Lesemodus"><ReadViewIcon /></ViewButton>
          <ViewButton aria-label="Weblayout"><WebViewIcon /></ViewButton>
          <ViewButton aria-label="Gliederung"><OutlineIcon /></ViewButton>
          <ViewButton aria-label="Entwurf"><DraftIcon /></ViewButton>
        </ViewButtons>
        <ZoomText>130 %</ZoomText>
        <button aria-label="Verkleinern"><ZoomOutIcon /></button>
        <ZoomClip>
          <ZoomRange type="range" aria-label="Zoom" min="0" max="111" defaultValue="50" />
        </ZoomClip>
      </StatusBar>
      <TaskEdge>
        <TaskSegment $w={48} $c="#1b1d22" />
        <TaskSegment $w={344} $c="#f4f4f4" />
        <TaskSegment $w={99} $c="#231e1c" />
        <TaskSegment $w={48} $c="#4a4a4c" />
        <TaskSegment $w={445} $c="#1f2124" />
        <TaskSegment $w={17} $c="#f4f4f4" />
      </TaskEdge>
    </Window>
  );
};

export default App;
